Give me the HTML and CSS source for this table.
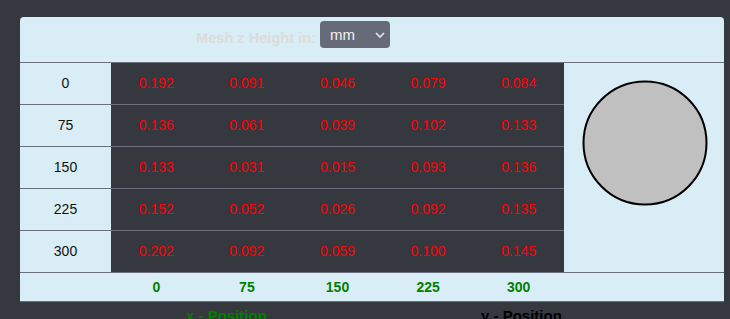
FILE: index.html
```html
<!DOCTYPE html>
<html>
<head>
<meta charset="utf-8">
<link rel="stylesheet" href="styles.css">
</head>
<body>
<div class="panel">
  <div class="header">
    <span class="header-label">Mesh z Height in:</span>
    <div class="select">
      <span>mm</span>
      <svg class="chev" width="10" height="6" viewBox="0 0 10 6"><path d="M1 1 L5 5 L9 1" fill="none" stroke="#e8e8ec" stroke-width="1.6"/></svg>
    </div>
  </div>
  <div class="grid">
    <div class="lbl">0</div><div class="v">0.192</div><div class="v">0.091</div><div class="v">0.046</div><div class="v">0.079</div><div class="v">0.084</div>
    <div class="side">
      <svg width="126" height="126" viewBox="0 0 126 126"><circle cx="63" cy="63" r="61.5" fill="#c0c0c0" stroke="#000" stroke-width="2"/></svg>
    </div>
    <div class="lbl">75</div><div class="v">0.136</div><div class="v">0.061</div><div class="v">0.039</div><div class="v">0.102</div><div class="v">0.133</div>
    <div class="lbl">150</div><div class="v">0.133</div><div class="v">0.031</div><div class="v">0.015</div><div class="v">0.093</div><div class="v">0.136</div>
    <div class="lbl">225</div><div class="v">0.152</div><div class="v">0.052</div><div class="v">0.026</div><div class="v">0.092</div><div class="v">0.135</div>
    <div class="lbl">300</div><div class="v">0.202</div><div class="v">0.092</div><div class="v">0.059</div><div class="v">0.100</div><div class="v">0.145</div>
  </div>
  <div class="footer">
    <div></div><div class="x">0</div><div class="x">75</div><div class="x">150</div><div class="x">225</div><div class="x">300</div><div></div>
  </div>
</div>
<div class="axes">
  <span class="axis-x">x - Position</span>
  <span class="axis-y">y - Position</span>
</div>
</body>
</html>
```

FILE: styles.css
```css
html, body {
  margin: 0;
  padding: 0;
  background: #363840;
  font-family: "Liberation Sans", Arial, sans-serif;
  font-size: 14px;
}
.panel {
  margin: 17px 0 0 20px;
  width: 704px;
  background: #d9edf6;
  border-radius: 4px 4px 0 0;
  border-bottom: 1px solid #6b6f7c;
}
.header {
  display: flex;
  align-items: flex-start;
  padding-left: 176px;
  border-bottom: 1px solid #6b6f7c;
  box-sizing: border-box;
  height: 46px;
}
.header-label {
  font-weight: bold;
  font-size: 14.6px;
  color: #dcdcdc;
  margin-top: 13px;
  margin-right: 4px;
}
.select {
  margin-top: 4px;
  width: 70px;
  height: 27px;
  background: #676b78;
  border-radius: 4px;
  color: #f2f2f2;
  font-size: 15px;
  display: flex;
  align-items: center;
  justify-content: space-between;
  padding: 0 5px 0 10px;
  box-sizing: border-box;
}
.chev { margin-top: 1px; }
.grid {
  display: grid;
  grid-template-columns: 91px repeat(5, 1fr) 160px;
  grid-auto-rows: 42px;
}
.lbl, .v {
  display: flex;
  align-items: center;
  justify-content: center;
  padding-bottom: 1px;
  border-bottom: 1px solid #6b6f7c;
  box-sizing: border-box;
}
.lbl { color: #111; }
.v { background: #363840; color: #ff0000; }
.side {
  grid-column: 7;
  grid-row: 1 / span 5;
  display: flex;
  justify-content: center;
  align-items: flex-start;
  padding-top: 17px;
  padding-left: 2px;
  border-bottom: 1px solid #6b6f7c;
  box-sizing: border-box;
}
.footer {
  display: grid;
  grid-template-columns: 91px repeat(5, 1fr) 160px;
  height: 28px;
}
.x {
  display: flex;
  align-items: center;
  justify-content: center;
  font-weight: bold;
  color: #008000;
}
.axes {
  position: relative;
  height: 20px;
  font-weight: bold;
  font-size: 15px;
}
.axis-x { position: absolute; left: 186px; top: 5px; color: #008000; }
.axis-y { position: absolute; left: 481px; top: 5px; color: #000; }
```
